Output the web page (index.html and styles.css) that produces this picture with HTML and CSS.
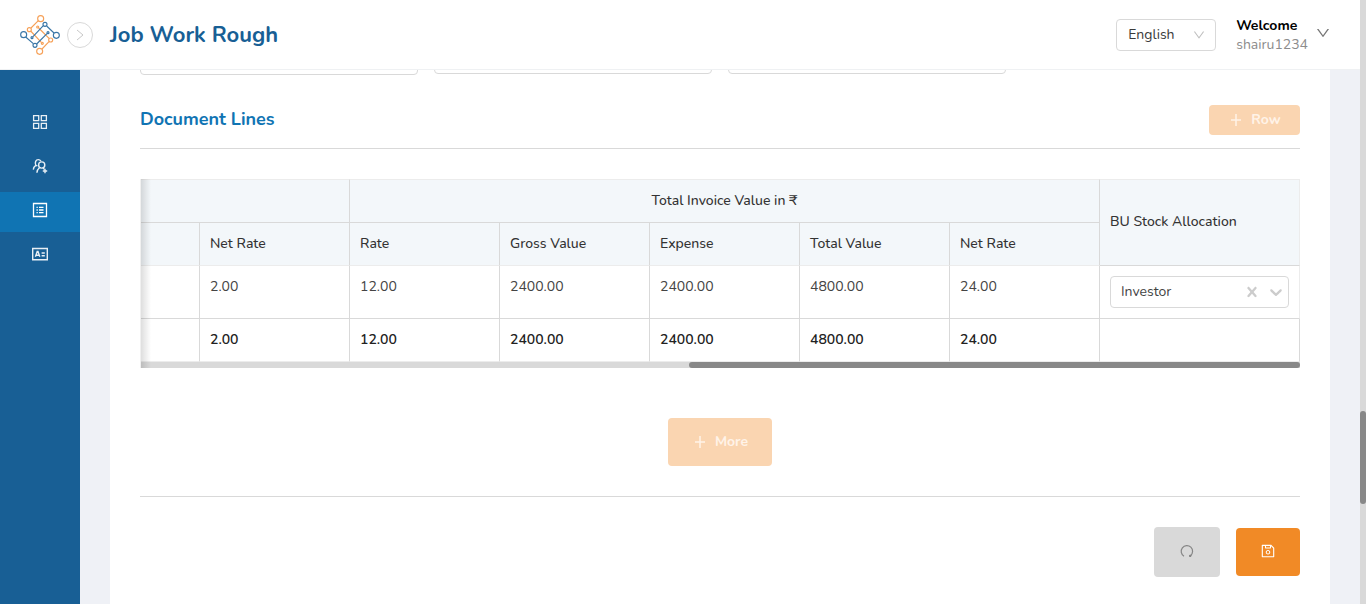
FILE: index.html
```html
<!DOCTYPE html>
<html lang="en">
<head>
<meta charset="utf-8">
<title>Job Work Rough</title>
<link rel="stylesheet" href="styles.css">
</head>
<body>
<div class="app">
  <header class="topbar">
    <svg class="logo" viewBox="15 15 120 120" fill="none" stroke-width="3.4" aria-hidden="true">
      <g stroke="#f6a057">
        <path d="M70 32 48 54M47 63l32 34M71 54l32 32M102 95l-21 22"/>
        <circle cx="77" cy="26" r="9"/><circle cx="43" cy="59" r="6"/><circle cx="82" cy="100" r="3"/>
        <circle cx="68" cy="51" r="3"/><circle cx="107" cy="90" r="6"/><circle cx="74" cy="124" r="9"/>
      </g>
      <g stroke="#3a76a6">
        <path d="M95 48l22 21M85 47 54 80M32 81l23 20M65 102l31-31"/>
        <circle cx="90" cy="43" r="6"/><circle cx="124" cy="76" r="9"/><circle cx="51" cy="83" r="3"/>
        <circle cx="26" cy="74" r="9"/><circle cx="60" cy="106" r="6"/><circle cx="99" cy="68" r="3"/>
      </g>
    </svg>
    <button class="expand" type="button" aria-label="Expand menu">
      <svg viewBox="0 0 12 12" fill="none" stroke="currentColor"><path d="M3 1l6 5-6 5"/></svg>
    </button>
    <h1 class="page-title">Job Work Rough</h1>
    <div class="language">
      <select class="language-select" aria-label="Language"><option>English</option></select>
      <svg class="language-arrow" viewBox="64 64 896 896" fill="currentColor" aria-hidden="true"><path d="M884 256h-75c-5.1 0-9.9 2.5-12.9 6.6L512 654.2 227.9 262.6c-3-4.1-7.8-6.6-12.9-6.6h-75c-6.5 0-10.3 7.4-6.5 12.7l352.6 486.1c12.8 17.6 39 17.6 51.7 0l352.6-486.1c3.9-5.3.1-12.7-6.4-12.7z"/></svg>
    </div>
    <button class="account" type="button">
      <span class="account-text"><strong>Welcome</strong><span class="account-name">shairu1234</span></span>
      <svg class="account-arrow" viewBox="64 64 896 896" fill="currentColor" aria-hidden="true"><path d="M884 256h-75c-5.1 0-9.9 2.5-12.9 6.6L512 654.2 227.9 262.6c-3-4.1-7.8-6.6-12.9-6.6h-75c-6.5 0-10.3 7.4-6.5 12.7l352.6 486.1c12.8 17.6 39 17.6 51.7 0l352.6-486.1c3.9-5.3.1-12.7-6.4-12.7z"/></svg>
    </button>
  </header>

  <div class="body">
    <nav class="sidebar" aria-label="Main">
      <a class="nav-item" href="#" aria-label="Dashboard">
        <svg viewBox="0 0 16 16" fill="none" stroke="currentColor" stroke-width="1.3"><path d="M1.6 1.6h5.1v5.1H1.6zM9.3 1.6h5.1v5.1H9.3zM1.6 9.3h5.1v5.1H1.6zM9.3 9.3h5.1v5.1H9.3z"/></svg>
      </a>
      <a class="nav-item" href="#" aria-label="Contacts">
        <svg viewBox="0 0 16 16" fill="none" stroke="currentColor" stroke-width="1.4"><circle cx="9.7" cy="7" r="3.1"/><path d="M4.9 14.8c.1-2.3 1-3.9 2.7-5.3M11 10.1l1.3 1.2M1.3 11.6c.2-2 1-3.3 2.5-4.3C2.6 4.4 3.8 1.600 6.300 1.600c1.200 0 2 .6 2.600 1.500M3.800 7.300l1.600.6M13 10.800v4.400M10.800 13h4.400"/></svg>
      </a>
      <a class="nav-item nav-item-active" href="#" aria-label="Documents" aria-current="page">
        <svg viewBox="0 0 16 16" fill="none" stroke="currentColor" stroke-width="1.3"><path d="M1.5 1.5h13v13h-13z"/><path d="M4.500 5.400h1.300M4.500 8h1.300M4.500 10.600h1.300M7 5.400h4.500M7 8h4.500M7 10.600h4.500"/></svg>
      </a>
      <a class="nav-item" href="#" aria-label="Accounts">
        <svg viewBox="0 0 16 16" fill="none" stroke="currentColor" stroke-width="1.4"><path d="M.7 2.500h14.600v11.200H.7z"/><path d="M3.400 10.800 5.200 5.500h.8l1.800 5.300M4.200 9.200h2.900M9.600 7h3.200M9.600 9.800h3.200"/></svg>
      </a>
    </nav>

    <main class="content">
      <section class="card">
        <div class="fields">
          <input class="field field-tall" type="text" aria-label="Reference">
          <input class="field" type="text" aria-label="Remarks">
          <input class="field" type="text" aria-label="Notes">
        </div>

        <div class="section-head">
          <h2 class="section-title">Document Lines</h2>
          <button class="btn btn-faded btn-row" type="button" disabled>
            <svg viewBox="0 0 12 12" fill="none" stroke="currentColor" stroke-width="1.5"><path d="M6 0v12M1 6h10"/></svg>Row
          </button>
        </div>

        <div class="lines">
          <table class="grid">
            <colgroup><col class="col-edge"><col class="col"><col class="col"><col class="col"><col class="col"><col class="col"><col class="col"><col class="col-wide"></colgroup>
            <thead>
              <tr class="group-row"><th colspan="2"></th><th class="centered" colspan="5">Total Invoice Value in ₹</th><th class="tall" rowspan="2">BU Stock Allocation</th></tr>
              <tr><th></th><th>Net Rate</th><th>Rate</th><th>Gross Value</th><th>Expense</th><th>Total Value</th><th>Net Rate</th></tr>
            </thead>
            <tbody>
              <tr><td></td><td>2.00</td><td>12.00</td><td>2400.00</td><td>2400.00</td><td>4800.00</td><td>24.00</td>
                <td class="cell-select">
                  <div class="picker">
                    <select class="picker-select" aria-label="BU Stock Allocation"><option>Investor</option></select>
                    <div class="picker-tools">
                      <button class="picker-clear" type="button" aria-label="Clear"><svg viewBox="0 0 20 20" fill="currentColor"><path d="M14.348 14.849c-0.469 0.469-1.229 0.469-1.697 0l-2.651-3.030-2.651 3.029c-0.469 0.469-1.229 0.469-1.697 0-0.469-0.469-0.469-1.229 0-1.697l2.758-3.15-2.759-3.152c-0.469-0.469-0.469-1.228 0-1.697s1.228-0.469 1.697 0l2.652 3.031 2.651-3.031c0.469-0.469 1.228-0.469 1.697 0s0.469 1.229 0 1.697l-2.758 3.152 2.758 3.15c0.469 0.469 0.469 1.229 0 1.698z"/></svg></button>
                      <svg class="picker-arrow" viewBox="0 0 20 20" fill="currentColor" aria-hidden="true"><path d="M4.516 7.548c0.436-0.446 1.043-0.481 1.576 0l3.908 3.747 3.908-3.747c0.533-0.481 1.141-0.446 1.574 0 0.436 0.445 0.408 1.197 0 1.615-0.406 0.418-4.695 4.502-4.695 4.502-0.217 0.223-0.502 0.335-0.787 0.335s-0.570-0.112-0.789-0.335c0 0-4.287-4.084-4.695-4.502s-0.436-1.170 0-1.615z"/></svg>
                    </div>
                  </div>
                </td>
              </tr>
            </tbody>
            <tfoot>
              <tr><td></td><td>2.00</td><td>12.00</td><td>2400.00</td><td>2400.00</td><td>4800.00</td><td>24.00</td><td></td></tr>
            </tfoot>
          </table>
          <div class="hscroll"><div class="hscroll-thumb"></div></div>
        </div>

        <div class="more">
          <button class="btn btn-faded btn-more" type="button" disabled>
            <svg viewBox="0 0 12 12" fill="none" stroke="currentColor" stroke-width="1.5"><path d="M6 0v12M1 6h10"/></svg>More
          </button>
        </div>

        <div class="actions">
          <button class="btn btn-reset" type="button" aria-label="Reset">
            <svg viewBox="0 0 14 14" fill="none" stroke="currentColor" stroke-width="1.2"><path d="M4 12.2A5.700 5.700 0 1 1 10.500 11.700"/><path d="M9 11l2.800-.4-.8 2.400-1.800.1z" fill="currentColor" stroke="none"/></svg>
          </button>
          <button class="btn btn-save" type="button" aria-label="Save">
            <svg viewBox="64 64 896 896" fill="currentColor"><path d="M893.3 293.3L730.7 130.7c-7.5-7.5-16.7-13-26.7-16V112H144c-17.7 0-32 14.3-32 32v736c0 17.7 14.3 32 32 32h736c17.7 0 32-14.3 32-32V338.5c0-17-6.7-33.2-18.7-45.2zM384 184h256v104H384V184zm456 656H184V184h136v136c0 17.7 14.3 32 32 32h320c17.7 0 32-14.3 32-32V205.8l136 136V840zM512 442c-79.5 0-144 64.5-144 144s64.5 144 144 144 144-64.5 144-144-64.5-144-144-144zm0 224c-44.2 0-80-35.8-80-80s35.8-80 80-80 80 35.8 80 80-35.8 80-80 80z"/></svg>
          </button>
        </div>
      </section>
    </main>
  </div>
</div>
<div class="vscroll" aria-hidden="true"><div class="vscroll-thumb"></div></div>
</body>
</html>
```
FILE: styles.css
```css
* { box-sizing: border-box; }

body {
  display: flex;
  height: 100vh;
  margin: 0;
  overflow: hidden;
  background: #eff1f6;
  color: #3a3a3a;
  font: 14px/22px Nunito, "Noto Sans", sans-serif;
}

button, select, input { font: inherit; color: inherit; }
button { padding: 0; border: 0; background: none; }
svg { display: block; flex: none; }

.app { flex: 1; min-width: 0; display: flex; flex-direction: column; }

/* Top bar */
.topbar {
  flex: none;
  display: flex;
  align-items: center;
  height: 70px;
  padding: 0 30px 0 20px;
  background: #fff;
  border-bottom: 1px solid #eff1f3;
}
.logo { width: 40px; height: 40px; }
.expand {
  display: grid;
  place-items: center;
  width: 26px;
  height: 26px;
  margin: 0 17px 0 7px;
  border: 1px solid #d9d9d9;
  border-radius: 50%;
  color: #c8c8c8;
}
.expand svg { width: 12px; height: 12px; }
.page-title {
  flex: 1;
  margin: 0;
  color: #185f95;
  font-size: 22px;
  line-height: 32px;
  font-weight: 700;
}
.language { position: relative; width: 100px; }
.language-select {
  display: block;
  width: 100%;
  height: 32px;
  padding: 0 28px 0 11px;
  border: 1px solid #d9d9d9;
  border-radius: 4px;
  background: #fff;
  appearance: none;
}
.language-arrow {
  position: absolute;
  top: 10px;
  right: 11px;
  width: 12px;
  height: 12px;
  color: #bfbfbf;
  pointer-events: none;
}
.account {
  display: flex;
  align-items: center;
  gap: 8px;
  margin-left: 20px;
  text-align: left;
}
.account-text { display: flex; flex-direction: column; line-height: 19px; color: #000; }
.account-text strong { font-weight: 700; }
.account-text .account-name { color: #8c8c8c; }
.account-arrow { width: 14px; height: 14px; margin-bottom: 4px; color: #777; }

/* Sidebar */
.body { flex: 1; min-height: 0; display: flex; }
.sidebar {
  flex: none;
  display: flex;
  flex-direction: column;
  gap: 4px;
  width: 80px;
  padding-top: 34px;
  background: #185f95;
}
.nav-item { display: grid; place-items: center; height: 40px; padding-bottom: 4px; color: #e8eff5; }
.nav-item-active { background: #1074b3; color: #fff; }
.nav-item svg { width: 16px; height: 16px; }

/* Content */
.content { display: flow-root; flex: 1; min-width: 0; overflow: hidden; padding: 0 30px; }
.card { display: flow-root; min-height: 100%; padding: 0 30px; background: #fff; }

.fields {
  display: grid;
  grid-template-columns: repeat(4, 1fr);
  align-items: start;
  gap: 16px;
  margin-top: -28px;
}
.field {
  width: 100%;
  height: 32px;
  border: 1px solid #d9d9d9;
  border-radius: 4px;
  background: #fff;
}
.field-tall { height: 33px; }

.section-head {
  display: flex;
  align-items: flex-start;
  justify-content: space-between;
  margin: 30px 0;
  padding-bottom: 13px;
  border-bottom: 1px solid #d9d9d9;
}
.section-title { margin: 0; color: #1074b3; font-size: 18px; line-height: 28px; font-weight: 700; }

.btn {
  display: flex;
  align-items: center;
  justify-content: center;
  gap: 9px;
  border-radius: 4px;
  font-weight: 700;
}
.btn svg { width: 12px; height: 12px; }
.btn-faded { padding-left: 2px; background: #fad5b1; color: #fff3e8; }
.btn-row { min-width: 91px; height: 30px; }
.btn-more { min-width: 104px; height: 48px; }

/* Lines table */
.lines { position: relative; }
.lines::before {
  content: "";
  position: absolute;
  inset: 0 auto 0 0;
  width: 10px;
  border-left: 1px solid #f0f0f0;
  background: linear-gradient(to right, rgba(0, 0, 0, .13), rgba(0, 0, 0, 0)) padding-box;
}
.grid { width: 100%; table-layout: fixed; border-collapse: separate; border-spacing: 0; }
.col-edge { width: 60px; }
.col { width: 150px; }
.col-wide { width: 200px; }
.grid th, .grid td {
  height: 43px;
  padding: 10px;
  border-right: 1px solid #d9d9d9;
  border-bottom: 1px solid #d9d9d9;
  text-align: left;
  vertical-align: top;
}
.grid th { background: #f3f7fa; border-bottom-color: #ececec; color: #333; font-weight: 500; }
.grid .group-row th { border-top: 1px solid #ececec; border-bottom-color: #d9d9d9; }
.grid .centered { text-align: center; }
.grid .tall { padding-bottom: 12px; vertical-align: middle; }
.grid .tall, .grid .cell-select { border-right-color: #ececec; }
.grid tbody td { color: #444; }
.grid tfoot td { border-bottom-color: #ececec; color: #222; font-weight: 600; }

.picker { position: relative; }
.picker-select {
  display: block;
  width: 100%;
  height: 32px;
  padding: 0 56px 0 10px;
  border: 1px solid #d9d9d9;
  border-radius: 4px;
  background: #fff;
  appearance: none;
}
.picker-tools {
  position: absolute;
  inset: 0 3px 0 auto;
  display: flex;
  align-items: center;
  gap: 4px;
  color: #ccc;
}
.picker-tools svg { width: 20px; height: 20px; }
.picker-arrow { pointer-events: none; }

.hscroll { display: grid; grid-template-columns: 549fr 611fr; height: 6px; background: #d9d9d9; }
.hscroll-thumb { grid-column: 2; border-radius: 3px; background: #888; }

.more {
  display: flex;
  justify-content: center;
  padding: 50px 0 30px;
  border-bottom: 1px solid #d9d9d9;
}
.actions {
  display: flex;
  align-items: center;
  justify-content: flex-end;
  gap: 16px;
  padding: 30px 0;
}
.actions .btn { padding-bottom: 2px; }
.btn-reset { width: 66px; height: 50px; background: #d9d9d9; color: #858585; }
.btn-save { width: 64px; height: 48px; background: #f18a26; color: #fff; }
.actions .btn svg { width: 14px; height: 14px; }

/* Page scroll track */
.vscroll { flex: none; display: grid; grid-template-rows: 411fr 93fr 100fr; width: 6px; background: #d9d9d9; }
.vscroll-thumb { grid-row: 2; border-radius: 3px; background: #888; }
```
